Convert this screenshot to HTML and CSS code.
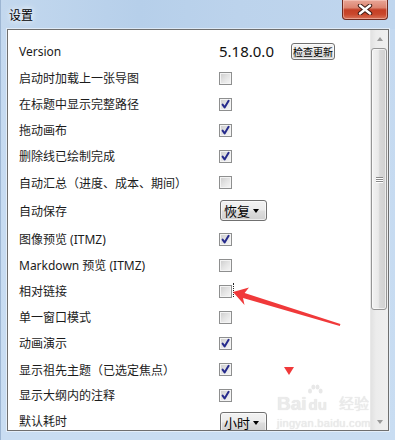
FILE: index.html
```html
<!DOCTYPE html>
<html lang="zh-CN">
<head>
<meta charset="utf-8">
<title>设置</title>
<link rel="stylesheet" href="styles.css">
</head>
<body>
<div class="window">
  <div class="titlebar">
    <span class="title">设置</span>
    <div class="close">
      <svg width="16" height="11" viewBox="0 0 16 11"><path d="M3 1.5 L13 9.5 M13 1.5 L3 9.5" stroke="#3b1a14" stroke-width="4.4" stroke-linecap="round"/><path d="M3 1.5 L13 9.5 M13 1.5 L3 9.5" stroke="#fff" stroke-width="2.4" stroke-linecap="round"/></svg>
    </div>
  </div>
  <div class="client">
    <div class="list">
      <div class="row row-version"><span class="label">Version</span><div class="ctrl"><span class="ver">5.18.0.0</span><span class="btn">检查更新</span></div></div>
      <div class="row"><span class="label">启动时加载上一张导图</span><div class="ctrl"><span class="cb"></span></div></div>
      <div class="row"><span class="label">在标题中显示完整路径</span><div class="ctrl"><span class="cb on"><svg viewBox="0 0 11 11"><path d="M2.6 5.6 L4.6 8.4 L8.6 1.8" /></svg></span></div></div>
      <div class="row"><span class="label">拖动画布</span><div class="ctrl"><span class="cb on"><svg viewBox="0 0 11 11"><path d="M2.6 5.6 L4.6 8.4 L8.6 1.8" /></svg></span></div></div>
      <div class="row"><span class="label">删除线已绘制完成</span><div class="ctrl"><span class="cb on"><svg viewBox="0 0 11 11"><path d="M2.6 5.6 L4.6 8.4 L8.6 1.8" /></svg></span></div></div>
      <div class="row"><span class="label cjk">自动汇总（进度、成本、期间）</span><div class="ctrl"><span class="cb"></span></div></div>
      <div class="row row-select"><span class="label">自动保存</span><div class="ctrl"><span class="select">恢复<i class="caret"></i></span></div></div>
      <div class="row"><span class="label">图像预览 (ITMZ)</span><div class="ctrl"><span class="cb on"><svg viewBox="0 0 11 11"><path d="M2.6 5.6 L4.6 8.4 L8.6 1.8" /></svg></span></div></div>
      <div class="row"><span class="label">Markdown 预览 (ITMZ)</span><div class="ctrl"><span class="cb"></span></div></div>
      <div class="row"><span class="label">相对链接</span><div class="ctrl"><span class="cb"></span></div></div>
      <div class="row"><span class="label">单一窗口模式</span><div class="ctrl"><span class="cb"></span></div></div>
      <div class="row"><span class="label">动画演示</span><div class="ctrl"><span class="cb on"><svg viewBox="0 0 11 11"><path d="M2.6 5.6 L4.6 8.4 L8.6 1.8" /></svg></span></div></div>
      <div class="row"><span class="label cjk">显示祖先主题（已选定焦点）</span><div class="ctrl"><span class="cb on"><svg viewBox="0 0 11 11"><path d="M2.6 5.6 L4.6 8.4 L8.6 1.8" /></svg></span></div></div>
      <div class="row"><span class="label">显示大纲内的注释</span><div class="ctrl"><span class="cb on"><svg viewBox="0 0 11 11"><path d="M2.6 5.6 L4.6 8.4 L8.6 1.8" /></svg></span></div></div>
      <div class="row row-last"><span class="label">默认耗时</span><div class="ctrl"><span class="select">小时<i class="caret"></i></span></div></div>
    </div>
    <div class="scrollbar">
      <div class="sb-btn"><i class="arrow-up"></i></div>
      <div class="thumb"><span class="grip"></span><span class="grip"></span><span class="grip"></span></div>
      <div class="sb-track"></div>
      <div class="sb-btn"><i class="arrow-down"></i></div>
    </div>
  </div>

  <div class="focus-dots"></div>
  <div class="watermark">
    <div class="wm-top"><span class="wm-bai">Bai</span><span class="wm-du"><svg class="paw" width="16" height="14" viewBox="0 0 16 14"><ellipse cx="3" cy="7" rx="2" ry="2.5"/><ellipse cx="6.3" cy="3" rx="2" ry="2.6"/><ellipse cx="10.5" cy="3" rx="2" ry="2.6"/><ellipse cx="13.6" cy="7" rx="2" ry="2.5"/></svg>du</span><span class="wm-cn">经验</span></div>
    <div class="wm-url">jingyan.baidu.com</div>
  </div>
  <svg class="annot" width="395" height="440" viewBox="0 0 395 440">
    <polygon points="233,292 249,287.6 244.6,293 340.4,324 339.8,326 243,298 244.5,305" fill="#f0393a"/>
    <polygon points="284,367 294,367 289,375" fill="#f0393a"/>
  </svg>
</div>
</body>
</html>
```

FILE: styles.css
```css
* { box-sizing: border-box; }
html, body { margin: 0; padding: 0; }
body {
  width: 395px;
  height: 440px;
  overflow: hidden;
  font-family: "Noto Sans", "Noto Sans CJK SC", sans-serif;
  background: #c6dbf1;
}
.window {
  position: relative;
  width: 395px;
  height: 440px;
  display: flex;
  flex-direction: column;
  background: linear-gradient(180deg, #b9d1eb 0%, #c4d9f0 30px, #c9ddf2 100%);
  border-left: 1px solid #9db6d3;
}
.titlebar {
  height: 29px;
  flex: none;
  display: flex;
  align-items: center;
  padding-left: 8px;
  background: linear-gradient(90deg, #c3d8ee 0%, #b6cfea 35%, #bcd3ec 60%, #c0d6ee 100%);
}
.title {
  font-size: 12px;
  color: #000;
  font-family: "Noto Sans CJK SC", sans-serif;
  text-shadow: 0 0 5px rgba(255,255,255,0.95), 0 0 8px rgba(255,255,255,0.8);
}
.close {
  position: absolute;
  top: 0;
  right: 7px;
  width: 46px;
  height: 20px;
  border: 1px solid #6e2a20;
  border-top: none;
  border-radius: 0 0 4px 4px;
  background: linear-gradient(180deg, #e9a697 0%, #dc8571 40%, #c43f26 52%, #c9472c 75%, #d8735a 100%);
  box-shadow: inset 0 0 0 1px rgba(255,220,210,0.45);
  display: flex;
  align-items: center;
  justify-content: center;
}
.client {
  flex: 1;
  margin: 0 6px 9px 6px;
  border: 1px solid #6f6f6f;
  background: #fff;
  display: flex;
  overflow: hidden;
  box-shadow: 0 0 0 1px rgba(255,255,255,0.5);
}
.list {
  flex: 1;
  padding-top: 7px;
  overflow: hidden;
}
.row {
  display: grid;
  grid-template-columns: 200px auto;
  align-items: center;
  height: 26px;
  padding-left: 11px;
  font-size: 12px;
  color: #1b1b1b;
}
.row-version { height: 28px; }
.row-select { height: 31px; }
.row-last {
  height: 30px;
  align-items: start;
  padding-top: 6px;
}
.row-last .label { line-height: 16px; }
.row-last .ctrl { margin-top: -2px; }
.label { white-space: nowrap; }
.cjk { font-family: "Noto Sans CJK SC", sans-serif; }
.ctrl {
  display: flex;
  align-items: center;
}
.ver {
  width: 72px;
  font-size: 15px;
  color: #111;
}
.btn {
  width: 44px;
  height: 17px;
  border: 1px solid #707070;
  border-radius: 3px;
  background: linear-gradient(180deg, #f4f4f4 0%, #ececec 48%, #dedede 52%, #d2d2d2 100%);
  box-shadow: inset 0 0 0 1px rgba(255,255,255,0.7);
  font-size: 10px;
  font-family: "Noto Sans CJK SC", sans-serif;
  display: flex;
  align-items: center;
  justify-content: center;
  color: #000;
  white-space: nowrap;
}
.cb {
  width: 13px;
  height: 13px;
  border: 1px solid #8e8f8f;
  background: linear-gradient(135deg, #cbcbcb 0%, #e4e4e4 50%, #f7f7f7 100%);
  box-shadow: inset 0 0 0 1px #f4f4f4;
  display: flex;
  align-items: center;
  justify-content: center;
}
.cb svg {
  width: 11px;
  height: 11px;
}
.cb svg path {
  fill: none;
  stroke: #262b8c;
  stroke-width: 2;
  stroke-linecap: round;
  stroke-linejoin: round;
}
.select {
  position: relative;
  width: 47px;
  height: 21px;
  margin-left: 1px;
  border: 1px solid #707070;
  border-radius: 3px;
  background: linear-gradient(180deg, #f2f2f2 0%, #ebebeb 48%, #dddddd 52%, #cfcfcf 100%);
  box-shadow: inset 0 0 0 1px rgba(255,255,255,0.6);
  display: flex;
  align-items: center;
  padding-left: 3px;
  font-size: 13px;
  line-height: 16px;
  font-family: "Noto Sans CJK SC", sans-serif;
  color: #000;
}
.caret {
  position: absolute;
  right: 7px;
  top: 8px;
  width: 0;
  height: 0;
  border-left: 3.5px solid transparent;
  border-right: 3.5px solid transparent;
  border-top: 4px solid #000;
}
.scrollbar {
  width: 18px;
  flex: none;
  display: flex;
  flex-direction: column;
  background: linear-gradient(90deg, #e2e2e2 0%, #ececec 30%, #efefef 100%);
  border-left: 1px solid #e8e8e8;
}
.sb-btn {
  height: 17px;
  flex: none;
  display: flex;
  align-items: center;
  justify-content: center;
}
.arrow-up, .arrow-down {
  width: 0;
  height: 0;
  border-left: 3.5px solid transparent;
  border-right: 3.5px solid transparent;
}
.arrow-up { border-bottom: 4px solid #9a9a9a; }
.arrow-down { border-top: 4px solid #9a9a9a; }
.thumb {
  height: 262px;
  flex: none;
  margin: 1px 1px 0 0;
  border: 1px solid #959595;
  border-radius: 3px;
  background: linear-gradient(90deg, #f2f2f2 0%, #e9e9e9 45%, #d8d8d8 55%, #d0d0d0 100%);
  box-shadow: inset 0 0 0 1px rgba(255,255,255,0.6);
  display: flex;
  flex-direction: column;
  align-items: center;
  justify-content: center;
  gap: 1px;
}
.grip {
  width: 7px;
  height: 1px;
  background: #888;
  box-shadow: 0 1px 0 #fff;
}
.sb-track { flex: 1; }
.focus-dots {
  position: absolute;
  left: 232px;
  top: 283px;
  width: 2px;
  height: 14px;
  border-left: 1px dotted #222;
}
.watermark {
  position: absolute;
  left: 276px;
  top: 386px;
  color: #ebebeb;
  font-family: "Liberation Sans", "Noto Sans CJK SC", sans-serif;
  text-shadow: 0 0 1px #dadada;
}
.wm-top {
  display: flex;
  align-items: flex-end;
  height: 27px;
}
.wm-bai {
  font-size: 19px;
  font-weight: bold;
  line-height: 19px;
}
.wm-du {
  position: relative;
  font-size: 15px;
  font-weight: bold;
  line-height: 16px;
  padding: 0 2px;
}
.paw {
  position: absolute;
  left: 0;
  top: -13px;
  fill: #e8e8e8;
}
.wm-cn {
  font-size: 15px;
  margin-left: 10px;
  line-height: 18px;
}
.wm-url {
  font-size: 11px;
  margin-top: 4px;
  letter-spacing: 0.3px;
}
.annot {
  position: absolute;
  left: -1px;
  top: 0;
  pointer-events: none;
}
```
